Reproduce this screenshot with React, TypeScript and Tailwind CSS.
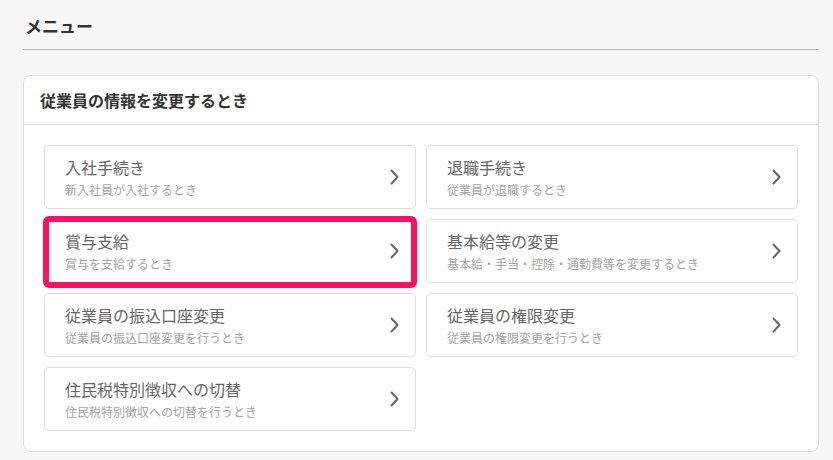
type MenuItem = {
  title: string
  description: string
  highlighted?: boolean
}

const items: MenuItem[] = [
  { title: '入社手続き', description: '新入社員が入社するとき' },
  { title: '退職手続き', description: '従業員が退職するとき' },
  { title: '賞与支給', description: '賞与を支給するとき', highlighted: true },
  { title: '基本給等の変更', description: '基本給・手当・控除・通勤費等を変更するとき' },
  { title: '従業員の振込口座変更', description: '従業員の振込口座変更を行うとき' },
  { title: '従業員の権限変更', description: '従業員の権限変更を行うとき' },
  { title: '住民税特別徴収への切替', description: '住民税特別徴収への切替を行うとき' },
]

function Chevron() {
  return (
    <svg width="9" height="16" viewBox="0 0 9 16" fill="none" className="shrink-0">
      <path d="M1.5 1.5 L7.5 8 L1.5 14.5" stroke="#666" strokeWidth="2" strokeLinecap="round" strokeLinejoin="round" />
    </svg>
  )
}

function MenuCard({ item }: { item: MenuItem }) {
  return (
    <div className="relative">
      <a
        href="#"
        className="flex h-16 items-center justify-between rounded-[5px] border border-[#dcdcdc] bg-white pl-5 pr-4"
      >
        <div className="-mt-px flex flex-col">
          <div className="text-[16px] leading-6 text-[#666]">{item.title}</div>
          <div className="mt-[2px] text-[12px] leading-[18px] text-[#a3a3a3]">{item.description}</div>
        </div>
        <Chevron />
      </a>
      {item.highlighted && (
        <div className="pointer-events-none absolute -top-[3px] -bottom-[5px] -left-px -right-px rounded-[6px] border-[6px] border-[#ff1060]" />
      )}
    </div>
  )
}

export default function App() {
  return (
    <div
      className="min-h-[460px] bg-[#f7f7f7] pt-[14px]"
      style={{ fontFamily: '"Noto Sans CJK JP", "Noto Sans", sans-serif' }}
    >
      <div className="ml-[23px] w-[796px]">
        <h1 className="pl-[2px] text-[17px] font-bold leading-6 text-[#333]">メニュー</h1>
        <div className="mt-[11px] border-b border-[#b4b4b4]" />

        <section className="mt-[25px] rounded-[8px] border border-[#dcdcdc] bg-white">
          <div className="flex h-[49px] items-center border-b border-[#dcdcdc] px-4">
            <h2 className="text-[16px] font-bold text-[#333]">従業員の情報を変更するとき</h2>
          </div>
          <div className="grid grid-cols-2 gap-[10px] px-5 pt-5 pb-5">
            {items.map((item) => (
              <MenuCard key={item.title} item={item} />
            ))}
          </div>
        </section>
      </div>
    </div>
  )
}
